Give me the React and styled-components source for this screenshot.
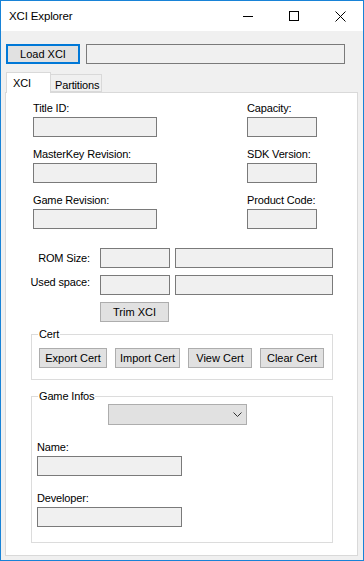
import React from 'react';
import styled, { createGlobalStyle } from 'styled-components';

const Global = createGlobalStyle`
  html, body { margin: 0; padding: 0; background: #fff; }
  #root { width: 364px; height: 561px; }
  * { box-sizing: border-box; }
`;

const Window = styled.div`
  width: 364px;
  height: 561px;
  border: 1px solid #1883d7;
  display: flex;
  flex-direction: column;
  background: #f0f0f0;
  font-family: "Liberation Sans", Arial, sans-serif;
  font-size: 11px;
  letter-spacing: -0.15px;
  color: #000;
`;

const TitleBar = styled.div`
  height: 30px;
  flex-shrink: 0;
  background: #fff;
  display: flex;
  align-items: center;
`;

const Title = styled.div`
  flex: 1;
  padding-left: 8px;
  font-size: 11.5px;
  line-height: 14px;
`;

const CaptionButton = styled.div`
  width: 46px;
  height: 30px;
  display: flex;
  align-items: center;
  justify-content: center;
`;

const Body = styled.div`
  flex: 1;
  display: flex;
  flex-direction: column;
  padding: 13px 5px 4px 4px;
`;

const TopRow = styled.div`
  display: flex;
  align-items: flex-start;
  margin-left: 1px;
`;

const Button = styled.button`
  width: ${p => p.$w}px;
  height: 20px;
  margin: 0;
  padding: 0;
  border: ${p => (p.$focused ? '2px solid #0078d7' : '1px solid #adadad')};
  background: #e1e1e1;
  font: inherit;
  color: #000;
  display: flex;
  align-items: center;
  justify-content: center;
  line-height: 14px;
`;

const TextBox = styled.div`
  width: ${p => p.$w}px;
  height: 20px;
  flex-shrink: 0;
  margin-left: ${p => p.$ml || 0}px;
  border: 1px solid #7a7a7a;
  background: #f0f0f0;
`;

const TabStrip = styled.div`
  display: flex;
  align-items: flex-end;
  height: 20px;
  margin-top: 8px;
  margin-left: 1px;
`;

const Tab = styled.div`
  position: relative;
  z-index: ${p => (p.$active ? 1 : 0)};
  width: ${p => p.$w}px;
  height: ${p => (p.$active ? 21 : 18)}px;
  margin-bottom: ${p => (p.$active ? -1 : 0)}px;
  background: ${p => (p.$active ? '#fff' : '#f0f0f0')};
  border: 1px solid #d9d9d9;
  border-bottom: ${p => (p.$active ? 'none' : '1px solid #d9d9d9')};
  border-left: ${p => (p.$active ? '1px solid #d9d9d9' : 'none')};
  padding-left: ${p => p.$pl}px;
  padding-top: ${p => (p.$active ? 3 : 3)}px;
  line-height: 14px;
`;

const Panel = styled.div`
  flex: 1;
  border: 1px solid #d9d9d9;
  background: #fff;
  padding-top: 8px;
  display: flex;
  flex-direction: column;
  align-items: flex-start;
`;

const InfoGrid = styled.div`
  margin-left: 27px;
  display: grid;
  grid-template-columns: 124px 70px;
  column-gap: 90px;
  row-gap: 10px;
`;

const Field = styled.div`
  display: flex;
  flex-direction: column;
  margin-top: ${p => p.$mt || 0}px;
`;

const Label = styled.div`
  height: 14px;
  line-height: 14px;
  margin-bottom: 2px;
  white-space: nowrap;
`;

const SizeRows = styled.div`
  margin-top: 19px;
  display: flex;
  flex-direction: column;
  gap: 7px;
`;

const SizeRow = styled.div`
  display: flex;
  align-items: flex-start;
`;

const RowLabel = styled.div`
  width: 84px;
  text-align: right;
  line-height: 20px;
  margin-top: ${p => p.$dy || 0}px;
  white-space: nowrap;
`;

const TrimWrap = styled.div`
  margin-top: 7px;
  margin-left: 94px;
`;

const Group = styled.fieldset`
  margin: ${p => p.$mt}px 0 0 25px;
  width: 302px;
  padding: 0;
  border: 1px solid #dcdcdc;
  min-width: 0;
`;

const Legend = styled.legend`
  margin-left: 6px;
  padding: 0 1px;
  line-height: 14px;
  height: 14px;
`;

const CertRow = styled.div`
  display: flex;
  gap: 8px;
  padding: 7px 0 11px 7px;
`;

const GameInner = styled.div`
  display: flex;
  flex-direction: column;
  align-items: flex-start;
  padding: 1px 0 15px 5px;
`;

const Combo = styled.div`
  width: 139px;
  height: 21px;
  margin-left: 71px;
  margin-bottom: 15px;
  border: 1px solid #adadad;
  background: #e1e1e1;
  display: flex;
  align-items: center;
  justify-content: flex-end;
  padding-right: 4px;
`;

const Spacer = styled.div`
  height: ${p => p.$h}px;
`;

const Minimize = () => (
  <svg width="10" height="10" viewBox="0 0 10 10">
    <line x1="0" y1="5.5" x2="10" y2="5.5" stroke="#000" strokeWidth="1" />
  </svg>
);

const Maximize = () => (
  <svg width="10" height="10" viewBox="0 0 10 10">
    <rect x="0.5" y="0.5" width="9" height="9" fill="none" stroke="#000" strokeWidth="1" />
  </svg>
);

const Close = () => (
  <svg width="11" height="11" viewBox="0 0 11 11">
    <path d="M0.5 0.5 L10.5 10.5 M10.5 0.5 L0.5 10.5" stroke="#000" strokeWidth="1" />
  </svg>
);

const Chevron = () => (
  <svg width="9" height="5" viewBox="0 0 9 5">
    <polyline points="0.5,0.5 4.5,4.5 8.5,0.5" fill="none" stroke="#333" strokeWidth="1" />
  </svg>
);

export default function App() {
  return (
    <>
      <Global />
      <Window>
        <TitleBar>
          <Title>XCI Explorer</Title>
          <CaptionButton><Minimize /></CaptionButton>
          <CaptionButton><Maximize /></CaptionButton>
          <CaptionButton><Close /></CaptionButton>
        </TitleBar>
        <Body>
          <TopRow>
            <Button $w={74} $focused>Load XCI</Button>
            <TextBox $w={259} $ml={6} />
          </TopRow>
          <TabStrip>
            <Tab $active $w={45} $pl={6}>XCI</Tab>
            <Tab $w={51} $pl={4}>Partitions</Tab>
          </TabStrip>
          <Panel>
            <InfoGrid>
              <Field><Label>Title ID:</Label><TextBox $w={124} /></Field>
              <Field><Label>Capacity:</Label><TextBox $w={70} /></Field>
              <Field><Label>MasterKey Revision:</Label><TextBox $w={124} /></Field>
              <Field><Label>SDK Version:</Label><TextBox $w={70} /></Field>
              <Field><Label>Game Revision:</Label><TextBox $w={124} /></Field>
              <Field><Label>Product Code:</Label><TextBox $w={70} /></Field>
            </InfoGrid>
            <SizeRows>
              <SizeRow>
                <RowLabel>ROM Size:</RowLabel>
                <TextBox $w={70} $ml={10} />
                <TextBox $w={158} $ml={5} />
              </SizeRow>
              <SizeRow>
                <RowLabel $dy={-3}>Used space:</RowLabel>
                <TextBox $w={70} $ml={10} />
                <TextBox $w={158} $ml={5} />
              </SizeRow>
            </SizeRows>
            <TrimWrap>
              <Button $w={69}>Trim XCI</Button>
            </TrimWrap>
            <Group $mt={5}>
              <Legend>Cert</Legend>
              <CertRow>
                <Button $w={68}>Export Cert</Button>
                <Button $w={65}>Import Cert</Button>
                <Button $w={64}>View Cert</Button>
                <Button $w={64}>Clear Cert</Button>
              </CertRow>
            </Group>
            <Group $mt={9}>
              <Legend>Game Infos</Legend>
              <GameInner>
                <Combo><Chevron /></Combo>
                <Field>
                  <Label>Name:</Label>
                  <TextBox $w={145} />
                </Field>
                <Spacer $h={15} />
                <Field>
                  <Label>Developer:</Label>
                  <TextBox $w={145} />
                </Field>
              </GameInner>
            </Group>
          </Panel>
        </Body>
      </Window>
    </>
  );
}
